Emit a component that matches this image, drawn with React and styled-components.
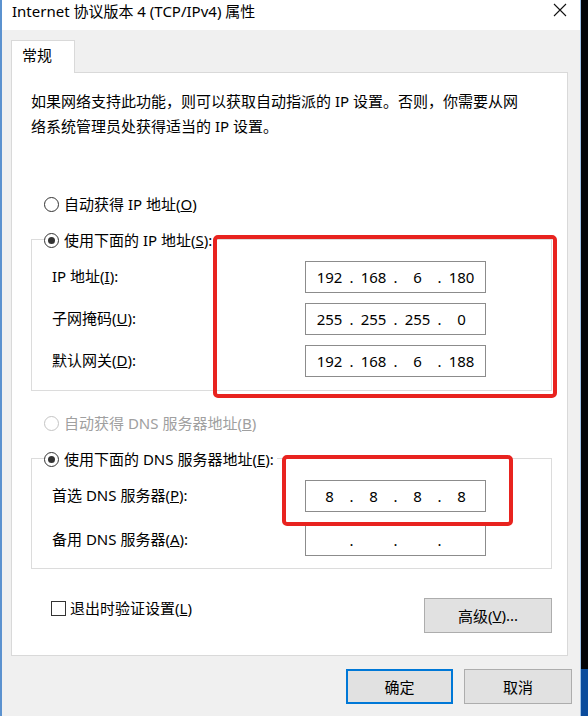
import React, { Fragment } from 'react';
import styled, { createGlobalStyle } from 'styled-components';

const GlobalStyle = createGlobalStyle`
    html, body {
        margin: 0;
        padding: 0;
        background: #000;
    }
    * {
        box-sizing: border-box;
    }
`;

const Screen = styled.div`
    display: flex;
    width: 588px;
    height: 716px;
    overflow: hidden;
    font-family: 'Noto Sans', 'Noto Sans CJK SC', sans-serif;
    color: #000;
`;

const Window = styled.div`
    position: relative;
    width: 581px;
    height: 716px;
    display: flex;
    flex-direction: column;
    background: #f0f0f0;
    border-left: 2px solid #5b92cf;
    border-right: 1px solid #9cc0e6;
`;

const Desktop = styled.div`
    flex: 1;
    background: linear-gradient(to bottom, #020408 0, #020408 669px, #0b4c9c 669px, #0b4c9c 100%);
`;

const TitleBar = styled.div`
    height: 30px;
    flex-shrink: 0;
    background: #fff;
    display: flex;
    align-items: flex-start;
    justify-content: space-between;
    padding: 1px 13px 0 10px;
`;

const Title = styled.div`
    font-size: 15px;
    line-height: 20px;
    white-space: nowrap;
`;

const CloseIcon = styled.svg`
    margin-top: 2px;
`;

const Body = styled.div`
    flex: 1;
    padding: 10px 12px 0 9px;
    display: flex;
    flex-direction: column;
`;

const TabStrip = styled.div`
    display: flex;
`;

const Tab = styled.div`
    position: relative;
    z-index: 1;
    width: 64px;
    height: 33px;
    margin-bottom: -1px;
    padding: 3px 0 0 10px;
    background: #fff;
    border: 1px solid #d9d9d9;
    border-bottom: none;
    font-size: 15px;
    line-height: 22px;
`;

const Panel = styled.div`
    height: 584px;
    background: #fff;
    border: 1px solid #d9d9d9;
    padding: 16px 15px 0 19px;
    display: flex;
    flex-direction: column;
`;

const Description = styled.div`
    font-size: 15px;
    line-height: 25px;
    white-space: nowrap;
`;

const RadioRow = styled.div`
    display: inline-flex;
    align-items: center;
    height: 20px;
    margin-top: ${p => p.$top || 0}px;
    margin-left: 13px;
    font-size: 15px;
    color: ${p => (p.$disabled ? '#a0a0a0' : '#000')};
    white-space: nowrap;
`;

const Legend = styled(RadioRow)`
    align-self: flex-start;
    margin: -10px 0 0 -6px;
    padding-right: 3px;
    background: #fff;
`;

const RadioText = styled.span`
    padding-bottom: 2px;
`;

const RadioDot = styled.span`
    width: 15px;
    height: 15px;
    margin-right: 5px;
    border-radius: 50%;
    border: 1px solid ${p => (p.$disabled ? '#c4c4c4' : '#333')};
    display: flex;
    align-items: center;
    justify-content: center;
    flex-shrink: 0;
    &::after {
        content: '';
        width: 7px;
        height: 7px;
        border-radius: 50%;
        background: #333;
        display: ${p => (p.$checked ? 'block' : 'none')};
    }
`;

const GroupBox = styled.div`
    margin-top: ${p => p.$top}px;
    width: 521px;
    border: 1px solid #dcdcdc;
    padding: 0 0 ${p => p.$bottom}px 18px;
    display: flex;
    flex-direction: column;
`;

const Rows = styled.div`
    margin-top: 11px;
    display: flex;
    flex-direction: column;
    gap: ${p => p.$gap}px;
`;

const FieldRow = styled.div`
    display: flex;
    align-items: center;
`;

const Label = styled.div`
    width: 255px;
    padding: 0 0 3px 2px;
    font-size: 15px;
    white-space: nowrap;
`;

const IpBox = styled.div`
    width: 181px;
    height: 32px;
    border: 1px solid #8c8c8c;
    padding: 0 0 1px 5px;
    display: grid;
    grid-template-columns: 37px 7px 37px 7px 37px 7px 37px;
    align-items: center;
    font-size: 15px;
    line-height: 20px;
    background: #fff;
`;

const Octet = styled.span`
    text-align: center;
`;

const Dot = styled.span`
    text-align: center;
`;

const BottomRow = styled.div`
    margin-top: 29px;
    width: 521px;
    display: flex;
    justify-content: space-between;
    align-items: flex-start;
`;

const CheckRow = styled.div`
    margin: 0 0 0 20px;
    height: 20px;
    display: flex;
    align-items: center;
    font-size: 15px;
    white-space: nowrap;
`;

const CheckBox = styled.span`
    width: 15px;
    height: 15px;
    border: 1px solid #333;
    margin-right: 4px;
    flex-shrink: 0;
`;

const Button = styled.div`
    width: ${p => p.$width}px;
    height: 35px;
    padding-bottom: 1px;
    background: #e1e1e1;
    border: ${p => (p.$primary ? '2px solid #0078d7' : '1px solid #adadad')};
    display: flex;
    align-items: center;
    justify-content: center;
    font-size: 15px;
    white-space: nowrap;
`;

const Footer = styled.div`
    margin-top: 13px;
    display: flex;
    justify-content: flex-end;
    gap: 11px;
    margin-right: -4px;
`;

// red annotation rectangles drawn over the screenshot
const Highlight = styled.div`
    position: absolute;
    left: ${p => p.$x}px;
    top: ${p => p.$y}px;
    width: ${p => p.$w}px;
    height: ${p => p.$h}px;
    border: 4px solid #e8231f;
    border-radius: 5px;
    pointer-events: none;
`;

const IpField = ({ octets }) => (
    <IpBox>
        {octets.map((o, i) => (
            <Fragment key={i}>
                <Octet>{o}</Octet>
                {i < 3 && <Dot>.</Dot>}
            </Fragment>
        ))}
    </IpBox>
);

const Radio = ({ checked, disabled }) => <RadioDot $checked={checked} $disabled={disabled} />;

const ipRows = [
    { label: <>IP 地址(<u>I</u>):</>, octets: ['192', '168', '6', '180'] },
    { label: <>子网掩码(<u>U</u>):</>, octets: ['255', '255', '255', '0'] },
    { label: <>默认网关(<u>D</u>):</>, octets: ['192', '168', '6', '188'] },
];

const dnsRows = [
    { label: <>首选 DNS 服务器(<u>P</u>):</>, octets: ['8', '8', '8', '8'] },
    { label: <>备用 DNS 服务器(<u>A</u>):</>, octets: ['', '', '', ''] },
];

const App = () => {
    return (
        <Screen>
            <GlobalStyle />
            <Window>
                <TitleBar>
                    <Title>Internet 协议版本 4 (TCP/IPv4) 属性</Title>
                    <CloseIcon width="14" height="14" viewBox="0 0 14 14">
                        <path d="M1 1 L13 13 M13 1 L1 13" stroke="#111" strokeWidth="1.1" fill="none" />
                    </CloseIcon>
                </TitleBar>
                <Body>
                    <TabStrip>
                        <Tab>常规</Tab>
                    </TabStrip>
                    <Panel>
                        <Description>
                            如果网络支持此功能，则可以获取自动指派的 IP 设置。否则，你需要从网
                            <br />
                            络系统管理员处获得适当的 IP 设置。
                        </Description>

                        <RadioRow $top={55}>
                            <Radio />
                            <RadioText>自动获得 IP 地址(<u>O</u>)</RadioText>
                        </RadioRow>

                        <GroupBox $top={25} $bottom={13}>
                            <Legend>
                                <Radio checked />
                                <RadioText>使用下面的 IP 地址(<u>S</u>):</RadioText>
                            </Legend>
                            <Rows $gap={10}>
                                {ipRows.map((r, i) => (
                                    <FieldRow key={i}>
                                        <Label>{r.label}</Label>
                                        <IpField octets={r.octets} />
                                    </FieldRow>
                                ))}
                            </Rows>
                        </GroupBox>

                        <RadioRow $top={22} $disabled>
                            <Radio disabled />
                            <RadioText>自动获得 DNS 服务器地址(<u>B</u>)</RadioText>
                        </RadioRow>

                        <GroupBox $top={25} $bottom={12}>
                            <Legend>
                                <Radio checked />
                                <RadioText>使用下面的 DNS 服务器地址(<u>E</u>):</RadioText>
                            </Legend>
                            <Rows $gap={12}>
                                {dnsRows.map((r, i) => (
                                    <FieldRow key={i}>
                                        <Label>{r.label}</Label>
                                        <IpField octets={r.octets} />
                                    </FieldRow>
                                ))}
                            </Rows>
                        </GroupBox>

                        <BottomRow>
                            <CheckRow>
                                <CheckBox />
                                <RadioText>退出时验证设置(<u>L</u>)</RadioText>
                            </CheckRow>
                            <Button $width={128}>高级(<u>V</u>)...</Button>
                        </BottomRow>
                    </Panel>
                    <Footer>
                        <Button $width={107} $primary>确定</Button>
                        <Button $width={108}>取消</Button>
                    </Footer>
                </Body>
                <Highlight $x={211} $y={235} $w={344} $h={163} />
                <Highlight $x={280} $y={455} $w={231} $h={71} />
            </Window>
            <Desktop />
        </Screen>
    );
};

export default App;
